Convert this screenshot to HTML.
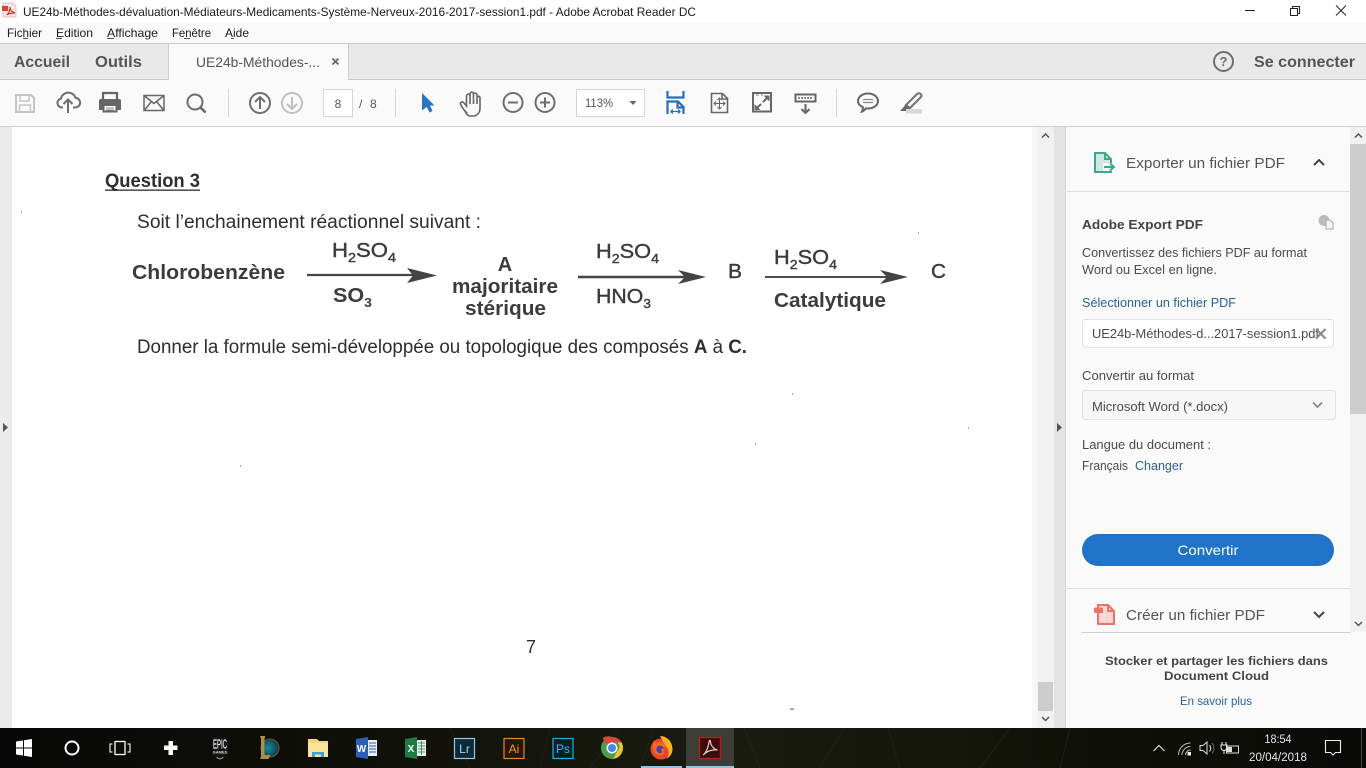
<!DOCTYPE html>
<html lang="fr">
<head>
<meta charset="utf-8">
<title>Adobe Acrobat Reader DC</title>
<style>
html,body{margin:0;padding:0;width:1366px;height:768px;overflow:hidden;background:#fff}
svg{display:block;position:absolute;left:0;top:0}
text{font-family:"Liberation Sans",sans-serif;white-space:pre}
.ui{fill:#1a1a1a;font-size:12px}
.tb{fill:none;stroke:#6e6e6e;stroke-width:2}
.p{fill:#4b4b4b;font-size:12.5px}
.pdf{fill:#2e2e2e;font-size:19px}
.ar{fill:#3c3c3c;font-size:20px;font-weight:bold}
.am{fill:#3c3c3c;font-size:20px;stroke:#3c3c3c;stroke-width:.4}
.tk{fill:#e6e6e6;font-size:11.5px}
</style>
</head>
<body>
<svg width="1366" height="768" viewBox="0 0 1366 768" xmlns="http://www.w3.org/2000/svg">
<defs>
<linearGradient id="bar" x1="0" x2="1" y1="0" y2="0">
<stop offset="0" stop-color="#080808"/>
<stop offset=".15" stop-color="#0c0c08"/>
<stop offset=".42" stop-color="#15160c"/>
<stop offset=".52" stop-color="#1b1c11"/>
<stop offset=".7" stop-color="#14160b"/>
<stop offset=".85" stop-color="#0d0f07"/>
<stop offset="1" stop-color="#0a0a07"/>
</linearGradient>
<radialGradient id="lol" cx=".4" cy=".5" r=".6">
<stop offset="0" stop-color="#1a8aa0"/>
<stop offset="1" stop-color="#0a3a48"/>
</radialGradient>
</defs>
<!-- title bar -->
<rect width="1366" height="22" fill="#fff"/>
<path d="M3 3h10l3 3v11H3z" fill="#f7e3e0" stroke="#d9b5b0" stroke-width=".7"/>
<rect x="2" y="6" width="6" height="5" fill="#d8432f"/>
<path d="M7 15c3-3 3-7 3-8 0 3 2 5 5 6-3 0-6 0-8 2z" fill="none" stroke="#c9281c" stroke-width="1.100"/>
<text x="23" y="16" class="ui" textLength="673" lengthAdjust="spacingAndGlyphs">UE24b-Méthodes-dévaluation-Médiateurs-Medicaments-Système-Nerveux-2016-2017-session1.pdf - Adobe Acrobat Reader DC</text>
<path d="M1245 10.500h10" stroke="#222" stroke-width="1"/>
<path d="M1290.500 8.500h7v7h-7zM1292.500 8.500v-2h7v7h-2" fill="none" stroke="#222"/>
<path d="M1336 5.500l10 10M1346 5.500l-10 10" stroke="#222" stroke-width="1"/>
<!-- menu -->
<rect y="22" width="1366" height="21" fill="#fafafa"/>
<text x="7" y="37" class="ui" textLength="35" lengthAdjust="spacingAndGlyphs">Fichier</text>
<text x="56" y="37" class="ui" textLength="37" lengthAdjust="spacingAndGlyphs">Edition</text>
<text x="107" y="37" class="ui" textLength="51" lengthAdjust="spacingAndGlyphs">Affichage</text>
<text x="172" y="37" class="ui" textLength="39" lengthAdjust="spacingAndGlyphs">Fenêtre</text>
<text x="225" y="37" class="ui" textLength="24" lengthAdjust="spacingAndGlyphs">Aide</text>
<path d="M23 38.500h5M56 38.500h6M107 38.500h7M184 38.500h6M231 38.500h3" stroke="#222" stroke-width=".8"/>
<!-- tab bar -->
<rect y="43" width="1366" height="37" fill="#e9e9e9"/>
<rect y="43" width="1366" height="1" fill="#c9c9c9"/>
<rect y="79" width="1366" height="1" fill="#c9c9c9"/>
<rect x="168.500" y="44" width="180" height="36" fill="#fafafa"/>
<path d="M168.500 44v36M348.500 44v36" stroke="#cfcfcf"/>
<text x="14" y="67" font-size="15.500" font-weight="bold" fill="#555" textLength="56" lengthAdjust="spacingAndGlyphs">Accueil</text>
<text x="95" y="67" font-size="15.500" font-weight="bold" fill="#555" textLength="47" lengthAdjust="spacingAndGlyphs">Outils</text>
<text x="196" y="67" font-size="14" fill="#555" textLength="124" lengthAdjust="spacingAndGlyphs">UE24b-Méthodes-...</text>
<path d="M332.500 58.500l6 6M338.500 58.500l-6 6" stroke="#666" stroke-width="1.800"/>
<circle cx="1223.500" cy="61.500" r="9.500" fill="none" stroke="#6e6e6e" stroke-width="2"/>
<text x="1223.500" y="66" font-size="13" font-weight="bold" fill="#6e6e6e" text-anchor="middle">?</text>
<text x="1254" y="67" font-size="15.500" font-weight="bold" fill="#555" textLength="101" lengthAdjust="spacingAndGlyphs">Se connecter</text>
<!-- toolbar -->
<rect y="80" width="1366" height="46" fill="#fafafa"/>
<rect y="126" width="1366" height="1" fill="#cfcfcf"/>
<!-- save -->
<path d="M16 95h15l3 3v14H16z" fill="none" stroke="#c4c4c4" stroke-width="2"/>
<path d="M20 95v6h9v-6M19.500 112v-7h11v7" fill="none" stroke="#c4c4c4" stroke-width="1.500"/>
<!-- upload cloud -->
<path d="M63 107.500h-1a4.500 4.500 0 0 1-1-8.900 7.500 7.500 0 0 1 14.500-.8 4.700 4.700 0 0 1-.5 9.700h-2" class="tb"/>
<path d="M68 113v-13M63.500 104l4.500-4.500 4.500 4.500" class="tb"/>
<!-- print -->
<path d="M103 99v-6h14v6" fill="none" stroke="#666" stroke-width="2.200"/>
<path d="M99 101a2 2 0 0 1 2-2h18a2 2 0 0 1 2 2v9h-4v-4h-14v4h-4z" fill="#666"/>
<path d="M103.500 104.500h13v7h-13z" fill="none" stroke="#666" stroke-width="2"/>
<path d="M106 108h8M106 110h8" stroke="#666" stroke-width=".8"/>
<!-- mail -->
<path d="M144 95.500h20v15h-20zM144 95.500l10 8 10-8M144 110.500l7.500-9M164 110.500l-7.500-9" fill="none" stroke="#666" stroke-width="1.500"/>
<!-- search -->
<circle cx="195" cy="102" r="7.500" class="tb"/>
<path d="M200.500 107.500l5 5" stroke="#666" stroke-width="2.600"/>
<rect x="228" y="89" width="1" height="28" fill="#d4d4d4"/>
<!-- up/down -->
<circle cx="260" cy="103" r="10" class="tb"/>
<path d="M260 109v-12M255 102l5-5 5 5" class="tb"/>
<circle cx="292" cy="103" r="10" fill="none" stroke="#c0c0c0" stroke-width="2"/>
<path d="M292 97v12M287 104l5 5 5-5" fill="none" stroke="#c0c0c0" stroke-width="2"/>
<rect x="323.500" y="89.500" width="29" height="27" fill="#fff" stroke="#d4d4d4"/>
<text x="338" y="108" font-size="12" fill="#555" text-anchor="middle">8</text>
<text x="359" y="108" font-size="12" fill="#555">/</text>
<text x="370" y="108" font-size="12" fill="#555">8</text>
<rect x="395" y="89" width="1" height="28" fill="#d4d4d4"/>
<!-- cursor -->
<path d="M422 93l12.500 12.500h-4.500l2.500 5.500-3 1.500-2.800-5.500-4.700 3.500z" fill="#2a74c4"/>
<!-- hand -->
<path d="M466 112C464 110 461 106 460.500 104c-.5-2 2-3 3.500-1l2.500 3V96c0-2.500 3.500-2.500 3.500 0V94c0-2.500 3.500-2.500 3.500 0v1c0-2.500 3.500-2.500 3.500 0v3c0-2.300 3-2.300 3 0V108c0 5-3 8-7 8h-3c-2 0-3.500-2-4.500-4zM470 96v8M473.500 94v10M477 96v8" fill="none" stroke="#666" stroke-width="1.600"/>
<!-- zoom out/in -->
<circle cx="513" cy="102.500" r="9.500" class="tb"/>
<path d="M508 102.500h10" class="tb"/>
<circle cx="545" cy="102.500" r="9.500" class="tb"/>
<path d="M540 102.500h10M545 97.500v10" class="tb"/>
<!-- zoom box -->
<rect x="576.500" y="89.500" width="68" height="27" fill="#fff" stroke="#d4d4d4"/>
<text x="585" y="107" font-size="12" fill="#555" textLength="28" lengthAdjust="spacingAndGlyphs">113%</text>
<path d="M629.500 101h7l-3.500 4z" fill="#666"/>
<!-- fit width -->
<path d="M667.500 91v6.500h16v-6.500" fill="none" stroke="#2a6db5" stroke-width="2.200"/>
<path d="M667.500 114v-12.500h10.500l5.500 5.500v7M677.500 102v5.500h6" fill="none" stroke="#2a6db5" stroke-width="2.200"/>
<path d="M670.500 111.500h10M670.500 111.500l2.500-2M670.500 111.500l2.500 2M680.500 111.500l-2.500-2M680.500 111.500l-2.500 2" fill="none" stroke="#2a6db5" stroke-width="1.200"/>
<!-- fit page -->
<path d="M711.500 93.500h11l5 5v14h-16zM722 93.500v5.500h5.500" fill="none" stroke="#666" stroke-width="1.600"/>
<path d="M719.500 98v11M714 103.500h11M717.500 100l2-2 2 2M717.500 107l2 2 2-2M716 101.500l-2 2 2 2M723 101.500l2 2-2 2" fill="none" stroke="#666" stroke-width="1"/>
<!-- fullscreen -->
<rect x="753" y="93" width="18" height="18.500" fill="none" stroke="#666" stroke-width="2"/>
<path d="M756 95h3M761 95h2" stroke="#888" stroke-width="1"/>
<path d="M763 102l5-5M761 104l-5 5" stroke="#666" stroke-width="2"/>
<path d="M769.500 95.500v6l-6-6zM754.500 110v-6l6 6z" fill="#666"/>
<!-- scroll tool -->
<rect x="795.500" y="94.500" width="20" height="7" fill="none" stroke="#666" stroke-width="2"/>
<path d="M798 98h15" stroke="#666" stroke-width="1.500" stroke-dasharray="2 1"/>
<path d="M805.500 104v9M801.500 109l4 4 4-4" fill="none" stroke="#666" stroke-width="2"/>
<rect x="836" y="89" width="1" height="28" fill="#d4d4d4"/>
<!-- comment -->
<path d="M868 93.500c5.500 0 10 3.300 10 7.500s-4.500 7.500-10 7.500c-.7 0-1.300 0-2-.2-1 1.200-2.500 2.700-4 3.200.7-1.300 1-3 .9-4.300-2.900-1.300-4.900-3.600-4.900-6.200 0-4.200 4.500-7.500 10-7.500z" fill="none" stroke="#666" stroke-width="2"/>
<path d="M863 99.500h10M863 102.500h10" stroke="#888" stroke-width="1.200"/>
<!-- highlighter -->
<path d="M906 105l11-11c1.200-1.200 3-.7 3.800 .2.800 .9 .8 2.300-.3 3.300L910 108z" fill="none" stroke="#777" stroke-width="2.200"/>
<path d="M905.500 105l4.500 4-2 2h-8z" fill="#666"/>
<rect x="906" y="109" width="16" height="4.500" fill="#d9d9d9"/>

<!-- document area -->
<rect y="127" width="1066" height="601" fill="#ececec"/>
<rect x="12" y="127" width="1020" height="601" fill="#fff"/>
<rect x="1037" y="127" width="17" height="601" fill="#f1f1f1"/>
<rect x="1054" y="127" width="11" height="601" fill="#e3e3e3"/>
<rect x="1065" y="127" width="1" height="601" fill="#d6d6d6"/>
<rect x="1032" y="127" width="5" height="601" fill="#f8f8f8"/>
<rect x="1038" y="682" width="15" height="29" fill="#cdcdcd"/>
<path d="M1042 137.500l3.500-3.500 3.500 3.500M1042 717l3.500 3.500 3.500-3.500" fill="none" stroke="#555" stroke-width="1.500"/>
<path d="M3 423v9l5-4.500z" fill="#555"/>
<path d="M1057 423v9l5-4.500z" fill="#555"/>

<!-- pdf content -->
<g style="filter:blur(.3px)">
<text x="105" y="187" class="pdf" font-weight="bold" style="font-weight:bold" textLength="95" lengthAdjust="spacingAndGlyphs">Question 3</text>
<rect x="105" y="189.500" width="95" height="1.300" fill="#2e2e2e"/>
<text x="137" y="228" class="pdf" textLength="344" lengthAdjust="spacingAndGlyphs">Soit l’enchainement réactionnel suivant :</text>
<text x="132" y="279" class="ar" textLength="153" lengthAdjust="spacingAndGlyphs">Chlorobenzène</text>
<text x="332" y="257" class="am" textLength="64" lengthAdjust="spacingAndGlyphs">H<tspan font-size="13" dy="5">2</tspan><tspan dy="-5">SO</tspan><tspan font-size="13" dy="5">4</tspan></text>
<path d="M307 275h112" stroke="#444" stroke-width="2.200"/>
<path d="M407 268l30 7.500-30 7.500 6-7.500z" fill="#444"/>
<text x="333" y="302" class="ar" textLength="39" lengthAdjust="spacingAndGlyphs">SO<tspan font-size="13" dy="5">3</tspan></text>
<text x="505" y="271" class="ar" text-anchor="middle">A</text>
<text x="452" y="293" class="ar" textLength="106" lengthAdjust="spacingAndGlyphs">majoritaire</text>
<text x="465" y="315" class="ar" textLength="81" lengthAdjust="spacingAndGlyphs">stérique</text>
<text x="596" y="258" class="am" textLength="63" lengthAdjust="spacingAndGlyphs">H<tspan font-size="13" dy="5">2</tspan><tspan dy="-5">SO</tspan><tspan font-size="13" dy="5">4</tspan></text>
<path d="M578 277h112" stroke="#444" stroke-width="2.400"/>
<path d="M678 270l28 7-28 7 7-7z" fill="#444"/>
<text x="596" y="303" class="am" textLength="55" lengthAdjust="spacingAndGlyphs">HNO<tspan font-size="13" dy="5">3</tspan></text>
<text x="728" y="278" class="am" textLength="14" lengthAdjust="spacingAndGlyphs">B</text>
<text x="774" y="264" class="am" textLength="63" lengthAdjust="spacingAndGlyphs">H<tspan font-size="13" dy="5">2</tspan><tspan dy="-5">SO</tspan><tspan font-size="13" dy="5">4</tspan></text>
<path d="M765 277h128" stroke="#333" stroke-width="1.800"/>
<path d="M880 270l28 7-28 7 7-7z" fill="#444"/>
<text x="774" y="307" class="ar" textLength="112" lengthAdjust="spacingAndGlyphs">Catalytique</text>
<text x="931" y="278" class="am" textLength="15" lengthAdjust="spacingAndGlyphs">C</text>
<text x="137" y="353" class="pdf" textLength="610" lengthAdjust="spacingAndGlyphs">Donner la formule semi-développée ou topologique des composés <tspan font-weight="bold">A</tspan> à <tspan font-weight="bold">C.</tspan></text>
<text x="526" y="653" class="pdf" style="font-size:18px">7</text>
<path d="M790 709h4M755 444h1M21 212h1M918 233h1M240 466h1M792 394h1M968 428h1" stroke="#555"/>
</g>

<!-- right panel -->
<rect x="1066" y="127" width="300" height="601" fill="#fafafa"/>
<rect x="1350" y="127" width="16" height="505" fill="#f1f1f1"/>
<rect x="1350" y="144" width="16" height="270" fill="#cdcdcd"/>
<path d="M1355 137.500l3.500-3.500 3.500 3.500M1355 622l3.500 3.500 3.500-3.500" fill="none" stroke="#555" stroke-width="1.500"/>
<!-- export icon -->
<path d="M1095 153h10l6 6v13h-16z" fill="#cfe8e1" stroke="#3ca98f" stroke-width="2"/>
<path d="M1105 153v6h6" fill="none" stroke="#3ca98f" stroke-width="2"/>
<rect x="1103" y="163" width="9" height="8" fill="#fafafa"/>
<path d="M1104 167h8.500M1110 163.500l4 3.500-4 3.500" fill="none" stroke="#3ca98f" stroke-width="2"/>
<text x="1126" y="168" font-size="15" fill="#555" textLength="159" lengthAdjust="spacingAndGlyphs">Exporter un fichier PDF</text>
<path d="M1314 165l5-5 5 5" fill="none" stroke="#444" stroke-width="2"/>
<rect x="1067" y="191" width="283" height="1" fill="#dedede"/>
<text x="1082" y="229" font-size="12.500" font-weight="bold" fill="#444" textLength="121" lengthAdjust="spacingAndGlyphs">Adobe Export PDF</text>
<circle cx="1324" cy="220.500" r="5.500" fill="#bcbcbc"/>
<path d="M1326 220h4l3 3v6h-7z" fill="#f3f3f3" stroke="#a8a8a8"/>
<text x="1082" y="257" class="p" textLength="225" lengthAdjust="spacingAndGlyphs">Convertissez des fichiers PDF au format</text>
<text x="1082" y="274" class="p" textLength="135" lengthAdjust="spacingAndGlyphs">Word ou Excel en ligne.</text>
<text x="1082" y="307" class="p" style="fill:#2a6396" textLength="154" lengthAdjust="spacingAndGlyphs">Sélectionner un fichier PDF</text>
<rect x="1082.500" y="319.500" width="251" height="28" rx="3" fill="#fff" stroke="#e2e2e2"/>
<text x="1092" y="338" class="p" textLength="227" lengthAdjust="spacingAndGlyphs">UE24b-Méthodes-d...2017-session1.pdf</text>
<path d="M1316 329l9.500 9.500M1325.500 329l-9.500 9.500" stroke="#888" stroke-width="2"/>
<text x="1082" y="380" class="p" textLength="112" lengthAdjust="spacingAndGlyphs">Convertir au format</text>
<rect x="1082.500" y="390.500" width="253" height="29" rx="3" fill="#f7f7f7" stroke="#e2e2e2"/>
<text x="1092" y="411" class="p" textLength="136" lengthAdjust="spacingAndGlyphs">Microsoft Word (*.docx)</text>
<path d="M1313 402.500l4.500 4.500 4.500-4.500" fill="none" stroke="#888" stroke-width="1.800"/>
<text x="1082" y="449" class="p" textLength="129" lengthAdjust="spacingAndGlyphs">Langue du document :</text>
<text x="1082" y="470" class="p" textLength="46" lengthAdjust="spacingAndGlyphs">Français</text>
<text x="1135" y="470" class="p" style="fill:#2a6396" textLength="48" lengthAdjust="spacingAndGlyphs">Changer</text>
<rect x="1082" y="534" width="252" height="32" rx="16" fill="#2073c8"/>
<text x="1208" y="555" font-size="14" fill="#fff" text-anchor="middle" textLength="61" lengthAdjust="spacingAndGlyphs">Convertir</text>
<rect x="1067" y="588" width="283" height="1" fill="#dedede"/>
<!-- create icon -->
<path d="M1098 605h10l6 6v13h-16z" fill="#f9d6d1" stroke="#e8756a" stroke-width="2"/>
<path d="M1108 605v6h6" fill="none" stroke="#e8756a" stroke-width="2"/>
<rect x="1094" y="607.500" width="9" height="5.500" rx="1.500" fill="#e8756a"/>
<text x="1126" y="620" font-size="15" fill="#555" textLength="139" lengthAdjust="spacingAndGlyphs">Créer un fichier PDF</text>
<path d="M1314 612l5 5 5-5" fill="none" stroke="#444" stroke-width="2"/>
<rect x="1082" y="632" width="268" height="1" fill="#cfcfcf"/>
<text x="1216.500" y="665" font-size="12" font-weight="bold" fill="#444" text-anchor="middle" textLength="223" lengthAdjust="spacingAndGlyphs">Stocker et partager les fichiers dans</text>
<text x="1216.500" y="680" font-size="12" font-weight="bold" fill="#444" text-anchor="middle" textLength="105" lengthAdjust="spacingAndGlyphs">Document Cloud</text>
<text x="1216" y="705" font-size="12" fill="#2a6396" text-anchor="middle" textLength="72" lengthAdjust="spacingAndGlyphs">En savoir plus</text>

<!-- taskbar -->
<rect y="728" width="1366" height="40" fill="url(#bar)"/>
<path d="M590 768l30-40M640 768l14-40M470 768l-20-40M820 768l24-40M900 768l-12-40M980 768l30-40M1060 768l10-40M540 768l10-40M760 768l-16-40" stroke="#2a2c18" stroke-width="1" opacity=".5"/>
<rect x="686" y="728" width="48" height="40" fill="#3c3d37"/>
<rect x="641" y="766" width="41" height="2" fill="#8cc4ea"/>
<rect x="686" y="766" width="48" height="2" fill="#8cc4ea"/>
<!-- windows -->
<path d="M16 741.500l7-1v7h-7zM24 740.300l8-1.300v8.500h-8zM16 748.500h7v7l-7-1zM24 748.500h8v8.500l-8-1.300z" fill="#fff"/>
<circle cx="72" cy="748" r="6.500" fill="none" stroke="#fff" stroke-width="2"/>
<path d="M115 741.500h10v13h-10z" fill="none" stroke="#fff" stroke-width="1.300"/>
<path d="M112.500 744h-2.500v8h2.500M127.500 744h2.500v8h-2.500" fill="none" stroke="#fff" stroke-width="1.100"/>
<path d="M168.500 741h4.500v4.500h4.500v4.500h-4.500v5h-4.500v-5H164v-4.500h4.500z" fill="#fff"/>
<!-- epic -->
<path d="M212 737h16v18l-8 4-8-4z" fill="#141414"/>
<text x="220" y="748.500" font-size="13" fill="#f2f2f2" stroke="#f2f2f2" stroke-width=".2" text-anchor="middle" textLength="14" lengthAdjust="spacingAndGlyphs">EPIC</text>
<text x="220" y="753.500" font-size="4" font-weight="bold" fill="#ddd" text-anchor="middle">GAMES</text>
<path d="M216.500 757.500l3.500 1.500 3.500-1.500" fill="none" stroke="#ccc" stroke-width=".7"/>
<!-- LoL -->
<circle cx="270" cy="748" r="9" fill="url(#lol)" stroke="#6a5a34" stroke-width="1"/>
<path d="M260 736h5v1.500l-.5 1v16.500h6l-2 4h-8.500l1-2.500v-18z" fill="#b08f45"/>
<!-- folder -->
<path d="M308 739h9l2 2h9v16h-20z" fill="#f4d774"/>
<rect x="308" y="743" width="20" height="14" fill="#f9e59a"/>
<path d="M312 757v-5h12v5h-3v-2.500h-6v2.500z" fill="#3fa3d8"/>
<!-- word -->
<path d="M356 739l12-2v22l-12-2z" fill="#2b5fb3"/>
<rect x="368" y="740" width="9" height="16" fill="#e7edf7"/>
<path d="M369 743h7M369 746h7M369 749h7M369 752h7" stroke="#2b5fb3"/>
<text x="361.500" y="752" font-size="10" font-weight="bold" fill="#fff" text-anchor="middle">W</text>
<!-- excel -->
<path d="M405 739l12-2v22l-12-2z" fill="#1d7a43"/>
<rect x="417" y="740" width="9" height="16" fill="#e7f2ea"/>
<path d="M418 743h7M418 746h7M418 749h7M418 752h7M421.500 741v14" stroke="#1d7a43" stroke-width=".8"/>
<text x="411" y="752" font-size="10" font-weight="bold" fill="#fff" text-anchor="middle">X</text>
<!-- Lr -->
<rect x="454.500" y="738.500" width="20" height="20" fill="#0d2a3a" stroke="#9cc3d9" stroke-width="1.200"/>
<text x="464.500" y="753" font-size="12" fill="#aed0e4" text-anchor="middle">Lr</text>
<!-- Ai -->
<rect x="504" y="738.500" width="20" height="20" fill="#2b1500" stroke="#e08a22" stroke-width="1.200"/>
<text x="514" y="753" font-size="12" fill="#f09a2a" text-anchor="middle">Ai</text>
<!-- Ps -->
<rect x="553" y="738.500" width="20" height="20" fill="#00202c" stroke="#22b0dc" stroke-width="1.200"/>
<text x="563" y="753" font-size="12" fill="#2cbde8" text-anchor="middle">Ps</text>
<!-- chrome -->
<circle cx="612" cy="748" r="11" fill="#4aa04a"/>
<path d="M612 737a11 11 0 0 1 9.500 5.500H612a5.500 5.500 0 0 0-5 3l-4.500-7.500A11 11 0 0 1 612 737z" fill="#d8463c"/>
<path d="M621.500 742.500a11 11 0 0 1-8.500 16.400l4.500-8a5.500 5.500 0 0 0 0-8.400z" fill="#f4c430"/>
<circle cx="612" cy="748" r="5.500" fill="#fff"/>
<circle cx="612" cy="748" r="4" fill="#4a88e8"/>
<!-- firefox -->
<circle cx="661" cy="749" r="10.500" fill="#e8452a"/>
<path d="M660 736c7 0 12.500 6 12.500 13 0 5-3 8-6 10 3-4 3-9 0-12-2-2-1-3-3-4-1-2-2-5-3.500-7z" fill="#ffb01f"/>
<path d="M654 740c1 2 2 3 4 3 3-2 5 0 7 2 1 2 0 3-1 3-1 3 2 5-2 7-3 1-6 0-8-3-2-4-1-9 0-12z" fill="#ef6a1e"/>
<path d="M658 746c2-1 5 0 6 2-2 1-3 1-3 2 1 1 2 2 0 3-2 1-4-1-4.500-3-.3-2 .5-3 1.500-4z" fill="#4a3fa0"/>
<!-- acrobat -->
<rect x="699.500" y="737.500" width="21" height="21" fill="#3a0d0d" stroke="#b2201c" stroke-width="1.400"/>
<path d="M703 755c3-2 5-7 6-13 .2-2 1.500-2 1.500 0 0 3 3 7 7 8-4-.5-9 .5-12 3z" fill="none" stroke="#e9c8c8" stroke-width="1.200"/>
<!-- tray -->
<path d="M1153.500 751l5.500-5.500 5.500 5.500" fill="none" stroke="#ddd" stroke-width="1.200"/>
<path d="M1178.500 755a12 12 0 0 1 12-12M1182 755a8.500 8.500 0 0 1 8.500-8.500M1185.500 755a5 5 0 0 1 5-5" fill="none" stroke="#bbb" stroke-width="1"/>
<rect x="1187.500" y="752" width="3.500" height="3.500" fill="#eee"/>
<path d="M1200 745.500h3l4-3.500v12l-4-3.500h-3zM1209.500 745c1.500 2 1.500 4.500 0 6.500" fill="none" stroke="#ddd" stroke-width="1"/>
<path d="M1212 743c2.500 3 2.500 7.500 0 10.500" fill="none" stroke="#666"/>
<path d="M1226.500 746h12v7h-12z" fill="none" stroke="#ddd"/>
<rect x="1227" y="747" width="5" height="5" fill="#ddd"/>
<path d="M1222 745v-3M1226 745v-3M1221 745h6v2.500a3 3 0 0 1-6 0zM1224 750v4" fill="none" stroke="#eee"/>
<text x="1278" y="743" class="tk" text-anchor="middle" textLength="27" lengthAdjust="spacingAndGlyphs">18:54</text>
<text x="1278" y="761" class="tk" text-anchor="middle" textLength="58" lengthAdjust="spacingAndGlyphs">20/04/2018</text>
<path d="M1325.500 740.500h15v12h-5l-2.500 2.500-2.500-2.500h-5z" fill="none" stroke="#eee" stroke-width="1.100"/>
<rect x="1361" y="728" width="1" height="40" fill="#444"/>
</svg>
</body>
</html>
